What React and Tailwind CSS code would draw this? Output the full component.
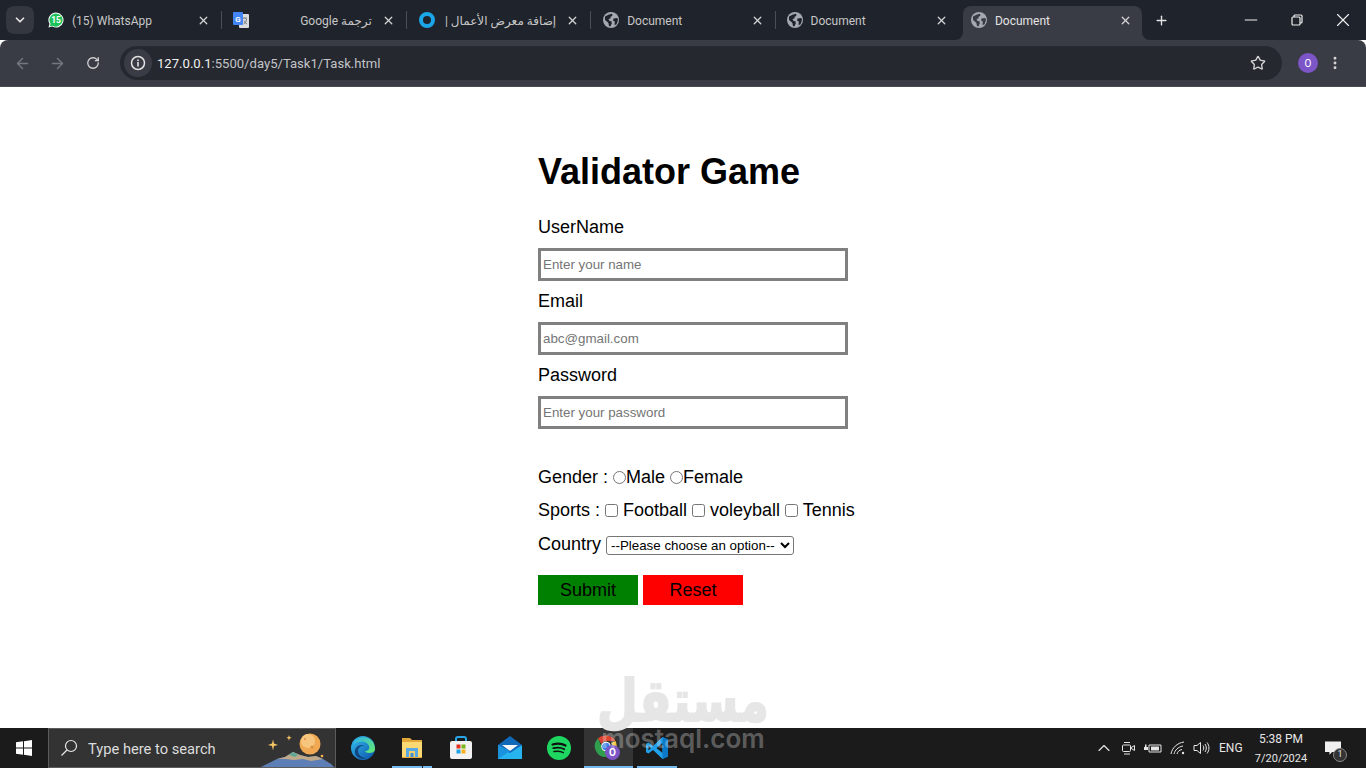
import React from "react";
import { X, Plus, ArrowLeft, ArrowRight, RotateCw, Star, Minus, EllipsisVertical, ChevronDown, ChevronUp } from "lucide-react";

function Globe({ active }) {
  const dark = active ? "#3a3c45" : "#1f232b";
  return (
    <svg width="16" height="16" viewBox="0 0 16 16" className="flex-none">
      <circle cx="8" cy="8" r="8" fill="#a5a8ae" />
      <path d="M2 4.500 L6 2.500 L9 1.800 L9.500 3.500 L7.500 5 L7.500 6.500 L5.500 7 L6.500 9 L8.500 9.300 L8.800 11.500 L7.300 14.400 L6 14 L5.300 10.800 L2 8 Z" fill={dark} />
      <path d="M10.500 6.500 L14.300 6 L15 8 L13.500 12.500 L11.500 13 L11.800 9.500 L10 8.500 Z" fill={dark} />
    </svg>
  );
}

function WhatsAppIcon() {
  return (
    <svg width="16" height="16" viewBox="0 0 17 17" className="flex-none">
      <path d="M8.500 0.500a8 8 0 1 1-3.900 15l-4.100 1 1.100-3.900a8 8 0 0 1 6.900-12.100z" fill="#fff" />
      <path d="M8.500 1.500a7 7 0 1 1-3.600 13l-3 .8.800-2.900a7 7 0 0 1 5.800-10.900z" fill="#1fc25a" />
      <text x="8.600" y="11.400" textAnchor="middle" fontSize="9" fontWeight="700" fill="#fff" fontFamily="Roboto, sans-serif">15</text>
    </svg>
  );
}

function TranslateIcon() {
  return (
    <svg width="16" height="16" viewBox="0 0 16 16" className="flex-none">
      <rect x="6" y="2" width="10" height="14" rx="1" fill="#dadce0" />
      <path d="M10 6h4M12 6v1M10.500 12c2-1 3-3 3-5M11 8.500c.6 1.700 1.700 2.800 3 3.500" stroke="#70757a" strokeWidth="1" fill="none" />
      <rect x="0" y="0" width="10" height="13" rx="1" fill="#4285f4" />
      <text x="5" y="9.500" textAnchor="middle" fontSize="8" fontWeight="700" fill="#fff" fontFamily="Roboto, sans-serif">G</text>
    </svg>
  );
}

function RingIcon() {
  return (
    <svg width="16" height="16" viewBox="0 0 16 16" className="flex-none">
      <circle cx="8" cy="8" r="6" fill="none" stroke="#1ba6e8" strokeWidth="4" />
    </svg>
  );
}

function Tab({ icon, title, rtl, sep, active, pad }) {
  return (
    <div className={`relative flex h-[34px] w-[184.4px] flex-none items-center pr-[14px] pb-[6px] ${pad}`}>
      {active && (
        <>
          <div className="absolute top-0 right-[4.4px] bottom-0 left-px rounded-t-lg bg-[#3a3c45]" />
          <svg width="8" height="8" viewBox="0 0 8 8" className="absolute bottom-0 -left-[7px]">
            <path d="M8 0v8H0a8 8 0 0 0 8-8z" fill="#3a3c45" />
          </svg>
          <svg width="8" height="8" viewBox="0 0 8 8" className="absolute right-[-3.6px] bottom-0">
            <path d="M0 0v8h8a8 8 0 0 1-8-8z" fill="#3a3c45" />
          </svg>
        </>
      )}
      <div className="relative flex-none">{icon}</div>
      <div
        dir={rtl ? "rtl" : "ltr"}
        className={`relative mt-px ml-2 flex-1 overflow-hidden text-[12px] whitespace-nowrap ${active ? "text-[#e3e3e3]" : "text-[#c7c7c7]"} ${rtl ? "pr-[2px] text-right" : "text-left"}`}
      >
        {title}
      </div>
      <X size={13} strokeWidth={2.4} className="relative ml-2 flex-none text-[#d5d5d5]" />
      {sep && <div className="absolute top-[5px] right-[2px] h-[18px] w-px bg-[#4b4e56]" />}
    </div>
  );
}

function Restore() {
  return (
    <svg width="12" height="12" viewBox="0 0 12 12" fill="none" stroke="#f0f0f0" strokeWidth="1.200">
      <rect x="1" y="3" width="8" height="8" rx="1" />
      <path d="M3 3V2a1 1 0 0 1 1-1h6a1 1 0 0 1 1 1v6a1 1 0 0 1-1 1H9" />
    </svg>
  );
}

function WinLogo() {
  return (
    <svg width="16" height="16" viewBox="0 0 16 16" fill="#fff">
      <path d="M0 2.300 7 1.300V7.500H0zM8 1.200 16 0V7.500H8zM0 8.500H7V14.700L0 13.700zM8 8.500H16V16L8 14.800z" />
    </svg>
  );
}

function EdgeIcon() {
  return (
    <svg width="24" height="24" viewBox="0 0 24 24">
      <defs>
        <linearGradient id="edgeA" x1="0" y1="0" x2="1" y2="1">
          <stop offset="0" stopColor="#35c1f1" />
          <stop offset="1" stopColor="#0a4fa8" />
        </linearGradient>
        <linearGradient id="edgeB" x1="0" y1="0" x2="1" y2="1">
          <stop offset="0" stopColor="#33b5e5" />
          <stop offset="1" stopColor="#66eb6e" />
        </linearGradient>
      </defs>
      <circle cx="12" cy="12" r="12" fill="url(#edgeA)" />
      <path d="M3 8C5 2 12 0 17 2c5 2 7 7 7 11 0 3-3 4-6 4-2 0-4-1-4-2 3 0 5-2 4-5C17 6 9 3 3 8z" fill="url(#edgeB)" />
      <path d="M14 10c-3-1-7 1-7 5 0 4 4 7 8 7-5 2-10-1-11-5C3 12 8 7 14 10z" fill="#0f2f66" opacity=".75" />
    </svg>
  );
}

function FolderIcon() {
  return (
    <svg width="24" height="24" viewBox="0 0 24 24">
      <path d="M2 2h8l2 2h10v18H2z" fill="#e2a93a" />
      <rect x="2" y="6" width="20" height="15" fill="#fbd874" />
      <rect x="6" y="12" width="12" height="9" fill="#56a8e2" />
      <rect x="9" y="15" width="6" height="6" fill="#f6cf6c" />
      <rect x="10.500" y="17" width="3" height="4" fill="#3d8fd1" />
    </svg>
  );
}

function StoreIcon() {
  return (
    <svg width="24" height="24" viewBox="0 0 24 24">
      <path d="M7 7V3a2 2 0 0 1 2-2h6a2 2 0 0 1 2 2v4" fill="none" stroke="#29a6e6" strokeWidth="2" />
      <rect x="1" y="5" width="22" height="18" rx="2" fill="#f2f2f2" />
      <rect x="7.500" y="8.500" width="4" height="4" fill="#e3301f" />
      <rect x="12.500" y="8.500" width="4" height="4" fill="#7ab51d" />
      <rect x="7.500" y="13.500" width="4" height="4" fill="#1fa3e6" />
      <rect x="12.500" y="13.500" width="4" height="4" fill="#f9b21d" />
    </svg>
  );
}

function MailIcon() {
  return (
    <svg width="24" height="24" viewBox="0 0 24 24">
      <path d="M0 9 12 0l12 9v14H0z" fill="#0f68b8" />
      <path d="M4 9h16l-8 6z" fill="#f4f7fa" />
      <path d="M0 9l12 8 12-8v14H0z" fill="#26b3ee" />
      <path d="M0 23l12-8-12-6z" fill="#1b93dc" />
    </svg>
  );
}

function SpotifyIcon() {
  return (
    <svg width="24" height="24" viewBox="0 0 24 24">
      <circle cx="12" cy="12" r="12" fill="#1ed760" />
      <path d="M5.500 8.500c4.500-1.300 9.500-1 13 1" stroke="#111" strokeWidth="2.200" strokeLinecap="round" fill="none" />
      <path d="M6.300 12.200c4-1 8-.7 11 1" stroke="#111" strokeWidth="1.800" strokeLinecap="round" fill="none" />
      <path d="M7 15.600c3.400-.8 6.700-.5 9.300 1" stroke="#111" strokeWidth="1.500" strokeLinecap="round" fill="none" />
    </svg>
  );
}

function ChromeIcon() {
  return (
    <svg width="28" height="28" viewBox="0 0 28 28">
      <path d="M12 1.500a11 11 0 0 1 9.500 5.500H12a5 5 0 0 0-4.500 3L3.800 4.500A11 11 0 0 1 12 1.500z" fill="#d9432f" />
      <path d="M21.500 7A11 11 0 0 1 13 23l4.400-8a5 5 0 0 0-.2-6z" fill="#f3c43b" />
      <path d="M13 23A11 11 0 0 1 3.800 4.500L7.500 12a5 5 0 0 0 6.800 5z" fill="#2f9e4e" />
      <circle cx="12" cy="12.500" r="4.800" fill="#fff" />
      <circle cx="12" cy="12.500" r="3.800" fill="#3b82e4" />
      <circle cx="18.500" cy="18.500" r="7.500" fill="#7c55c7" />
      <text x="18.500" y="22" textAnchor="middle" fontSize="10" fontWeight="700" fill="#fff" fontFamily="Roboto, sans-serif">O</text>
    </svg>
  );
}

function VSCodeIcon() {
  return (
    <svg width="24" height="24" viewBox="0 0 24 24">
      <path d="M17.500 1 8 10 3.500 6.500 1 7.700v8.600l2.500 1.200L8 14l9.500 9 5.500-2.500v-17zM17.500 7v10l-6-5zM3.500 9.500 6 12l-2.500 2.500z" fill="#23a0ea" />
      <path d="M17.500 1 23 3.500v17L17.500 23z" fill="#0a78c6" />
    </svg>
  );
}

function SearchArt() {
  return (
    <svg width="76" height="40" viewBox="0 0 76 40" className="flex-none">
      <path d="M0 40c6-3 12-6 18-9l8-2 8-5 7 3 8 2 8-1 7 3 8 5 4 4z" fill="#5d7fb5" />
      <path d="M18 31l8-2 8-5 7 3 8 2 8-1 7 3-12 2-8-2-9 1-8-1z" fill="#bfa989" />
      <path d="M30 27l4-3 5 3-3 2z" fill="#5ea894" />
      <circle cx="51" cy="16" r="10.500" fill="#f0a952" />
      <circle cx="49" cy="13" r="7" fill="#f6c67f" />
      <circle cx="46" cy="11" r="1" fill="#d98f3e" />
      <circle cx="53" cy="19" r="1.500" fill="#d98f3e" />
      <path d="M14 11.500l1 4 4 1.500-4 1-1 4.500-1-4.500-4-1 4-1.500z" fill="#f7c564" />
      <path d="M30 7l.7 2 2 .8-2 .7-.7 2.200-.7-2.200-2-.7 2-.8z" fill="#f7c564" />
      <circle cx="63" cy="28" r="1.300" fill="#f7b54d" />
    </svg>
  );
}

function TaskIcon({ children, line, split, hot }) {
  return (
    <div className={`relative flex h-10 w-[49px] flex-none items-center justify-center ${hot ? "bg-[#343434]" : ""}`}>
      {children}
      {line && <div className={`absolute bottom-0 h-[2px] bg-[#76b9ed] ${hot ? "inset-x-0" : "inset-x-[4.5px]"}`} />}
      {split && <div className="absolute right-[14px] bottom-0 h-[2px] w-px bg-[#1b1b1b]" />}
    </div>
  );
}

function Field({ label, type, placeholder }) {
  return (
    <div className="block">
      <label className="block h-[21px] leading-[21px]">{label}</label>
      <input
        type={type}
        placeholder={placeholder}
        className="mt-[10px] mb-[10px] block h-[33px] w-[310px] border-[3px] border-[#808080] px-[2px] text-[13.33px] leading-none placeholder:text-[#757575]"
      />
    </div>
  );
}

export default function App() {
  const ui = { fontFamily: 'Roboto, "DejaVu Sans", sans-serif' };
  const form = { fontFamily: '"Liberation Sans", Arial, sans-serif' };
  return (
    <div className="relative flex h-screen w-full flex-col overflow-hidden bg-white" style={ui}>
      {/* Tab strip */}
      <div className="flex h-10 flex-none items-end bg-[#1f232b]">
        <div className="mb-[6px] ml-[6px] flex h-[28px] w-[28px] flex-none items-center justify-center rounded-lg bg-[#343740]">
          <ChevronDown size={14} strokeWidth={3} className="text-[#e3e3e3]" />
        </div>
        <div className="ml-[6px] flex items-end">
          <Tab icon={<WhatsAppIcon />} title="(15) WhatsApp" sep pad="pl-2" />
          <Tab icon={<TranslateIcon />} title="ترجمة Google" rtl sep pad="pl-[9px]" />
          <Tab icon={<RingIcon />} title="إضافة معرض الأعمال |" rtl sep pad="pl-[10px]" />
          <Tab icon={<Globe />} title="Document" sep pad="pl-[10px]" />
          <Tab icon={<Globe />} title="Document" pad="pl-[9px]" />
          <Tab icon={<Globe active />} title="Document" active pad="pl-[9px]" />
        </div>
        <div className="flex h-[34px] w-[30px] flex-none items-center justify-center pb-[6px]">
          <Plus size={15} strokeWidth={2.2} className="text-[#e3e3e3]" />
        </div>
        <div className="ml-auto flex h-10 flex-none items-center self-start">
          <div className="flex h-10 w-[46px] items-center justify-center"><Minus size={20} strokeWidth={1.2} className="text-[#f0f0f0]" /></div>
          <div className="flex h-10 w-[46px] items-center justify-center"><Restore /></div>
          <div className="flex h-10 w-[46px] items-center justify-center"><X size={22} strokeWidth={1.2} className="text-[#f0f0f0]" /></div>
        </div>
      </div>

      {/* Toolbar */}
      <div className="flex h-[47px] flex-none items-start rounded-t-lg border-b border-b-[#4a4c54] bg-[#3a3c45] pt-[6px]">
        <div className="flex h-[34px] w-[120px] flex-none items-center">
          <ArrowLeft size={17} strokeWidth={2} className="ml-[14px] text-[#75777e]" />
          <ArrowRight size={17} strokeWidth={2} className="ml-[18px] text-[#75777e]" />
          <RotateCw size={14} strokeWidth={2.2} className="ml-[20px] text-[#d5d5d5]" />
        </div>
        <div className="flex h-[34px] flex-1 items-center rounded-full bg-[#25282f] pr-4 pl-1">
          <div className="flex h-[28px] w-[28px] flex-none items-center justify-center rounded-full bg-[#3a3c45]">
            <svg width="16" height="16" viewBox="0 0 16 16" fill="none">
              <circle cx="8" cy="8" r="6.500" stroke="#e3e3e3" strokeWidth="1.500" />
              <rect x="7.200" y="7" width="1.600" height="4.500" fill="#e3e3e3" />
              <rect x="7.200" y="4.500" width="1.600" height="1.600" fill="#e3e3e3" />
            </svg>
          </div>
          <div className="mt-px ml-[5px] text-[13.1px] whitespace-nowrap text-[#c2c4c8]">
            <span className="text-[#f0f0f0]">127.0.0.1</span>:5500/day5/Task1/Task.html
          </div>
          <Star size={16} strokeWidth={2} className="ml-auto text-[#d5d5d5]" />
        </div>
        <div className="flex h-[34px] w-[84px] flex-none items-center">
          <div className="ml-[16px] flex h-5 w-5 items-center justify-center rounded-full bg-[#7c55c7] text-[10px] text-white">O</div>
          <EllipsisVertical size={16} strokeWidth={2.4} className="ml-[9px] text-[#d5d5d5]" />
        </div>
      </div>

      {/* Page */}
      <main className="min-h-0 flex-1 pt-[65px] pl-[538px] text-[18px] whitespace-nowrap text-black" style={form}>
        <h1 className="mb-[25px] h-[40px] text-[36px] leading-[40px] font-bold">Validator Game</h1>
        <Field label="UserName" type="text" placeholder="Enter your name" />
        <Field label="Email" type="email" placeholder="abc@gmail.com" />
        <Field label="Password" type="password" placeholder="Enter your password" />
        <div className="mt-[38px] h-[21px] leading-[21px]">
          Gender : <input type="radio" name="g" className="align-[-1px]" />Male <input type="radio" name="g" className="align-[-1px]" />Female
        </div>
        <div className="mt-[12px] h-[21px] leading-[21px]">
          Sports : <input type="checkbox" className="align-[-1px]" /> Football <input type="checkbox" className="align-[-1px]" /> voleyball <input type="checkbox" className="align-[-1px]" /> Tennis
        </div>
        <div className="mt-[13px] h-[21px] leading-[21px]">
          Country{" "}
          <select className="h-[19px] w-[188px] rounded-[3px] border border-[#767676] bg-white align-[0px] text-[13.33px]">
            <option>--Please choose an option--</option>
          </select>
        </div>
        <div className="mt-[20px] flex gap-[5px]">
          <button type="button" className="h-[30px] w-[100px] bg-[#008000] text-black">Submit</button>
          <button type="button" className="h-[30px] w-[100px] bg-[#ff0000] text-black">Reset</button>
        </div>
      </main>

      {/* Taskbar */}
      <footer className="flex h-10 flex-none items-center bg-[#1b1b1b] text-white">
        <div className="flex h-10 w-12 flex-none items-center justify-center"><WinLogo /></div>
        <div className="flex h-10 w-[288px] flex-none items-center justify-between overflow-hidden border border-[#5c5c5c] bg-[#333333] pl-[11px]">
          <div className="flex items-center">
            <svg width="18" height="18" viewBox="0 0 18 18" fill="none" stroke="#e6e6e6" strokeWidth="1.200">
              <circle cx="11" cy="7" r="5.500" />
              <path d="M7 11 1.500 16.500" />
            </svg>
            <span className="mt-[3px] ml-[10px] text-[14.7px] text-[#dcdcdc]">Type here to search</span>
          </div>
          <SearchArt />
        </div>
        <div className="ml-[2.5px] flex">
          <TaskIcon><EdgeIcon /></TaskIcon>
          <TaskIcon line split><FolderIcon /></TaskIcon>
          <TaskIcon><StoreIcon /></TaskIcon>
          <TaskIcon><MailIcon /></TaskIcon>
          <TaskIcon><SpotifyIcon /></TaskIcon>
          <TaskIcon line hot><ChromeIcon /></TaskIcon>
          <TaskIcon line><VSCodeIcon /></TaskIcon>
        </div>
        <div className="ml-auto flex h-10 items-center pr-[4px] text-[#e6e6e6]">
          <ChevronUp size={20} strokeWidth={1.400} />
          <svg width="16" height="16" viewBox="0 0 16 16" fill="none" stroke="#e6e6e6" strokeWidth="1" className="ml-[7px]">
            <rect x="1.500" y="5" width="8" height="6.500" rx="1" />
            <path d="M9.500 8l4-2.500v5L9.500 8zM3 2.500h6M3 14h6" />
          </svg>
          <svg width="18" height="14" viewBox="0 0 18 14" className="ml-[7px]" fill="#e6e6e6">
            <path d="M5 4h12v7H5z" fill="none" stroke="#e6e6e6" />
            <rect x="7" y="5.500" width="8" height="4" />
            <path d="M0 6h4v3H0zM1 3.500h1V6H1zM3 3.500h-.500V6H3z" />
          </svg>
          <svg width="16" height="14" viewBox="0 0 16 14" fill="none" stroke="#e6e6e6" strokeWidth="1" className="ml-[8px]">
            <path d="M1 13C2 7 7 2 14 1M4 13c1-4 4-7 9-8M7 13c.6-2 2-4 5-4.500" />
            <circle cx="13" cy="12" r="1.200" fill="#e6e6e6" stroke="none" />
          </svg>
          <svg width="17" height="14" viewBox="0 0 17 14" fill="none" stroke="#e6e6e6" strokeWidth="1" className="ml-[7px]">
            <path d="M1 4.500h3l3.500-3v11l-3.500-3H1zM10 4.500c1 1.500 1 3.500 0 5M12 3c1.800 2.500 1.800 5.500 0 8M14 1.500c2.600 3.300 2.600 7.700 0 11" />
          </svg>
          <span className="ml-[9px] w-[27px] text-[12px]">ENG</span>
          <div className="mt-[2px] ml-[7px] flex w-[56px] flex-col items-center leading-[19px]">
            <span className="text-[12px]">5:38 PM</span>
            <span className="text-[11px]">7/20/2024</span>
          </div>
          <div className="relative mr-[17px] ml-[12px] flex h-10 w-[24px] items-center justify-center">
            <svg width="16" height="15" viewBox="0 0 18 16" fill="#f0f0f0">
              <path d="M0 0h18v12H8l-3 3v-3H0z" />
            </svg>
            <div className="absolute right-[-2px] bottom-[6px] flex h-[14px] w-[14px] items-center justify-center rounded-full border border-[#8a8a8a] bg-[#333] text-[9px]">1</div>
          </div>
        </div>
      </footer>

      {/* Watermark */}
      <div dir="ltr" className="pointer-events-none absolute top-[665px] left-[597px] origin-left scale-x-[0.81] text-[58px] leading-[72px] font-bold whitespace-nowrap text-[#e6e6e6] [-webkit-text-stroke:2px_#e6e6e6]" style={{ fontFamily: '"DejaVu Sans", sans-serif' }}>مستقل</div>
      <div className="pointer-events-none absolute top-[722px] left-[600px] w-[166px] text-center text-[26px] leading-[34px] font-semibold whitespace-nowrap text-white/30" style={{ fontFamily: 'Inter, sans-serif' }}>mostaql.com</div>
    </div>
  );
}
